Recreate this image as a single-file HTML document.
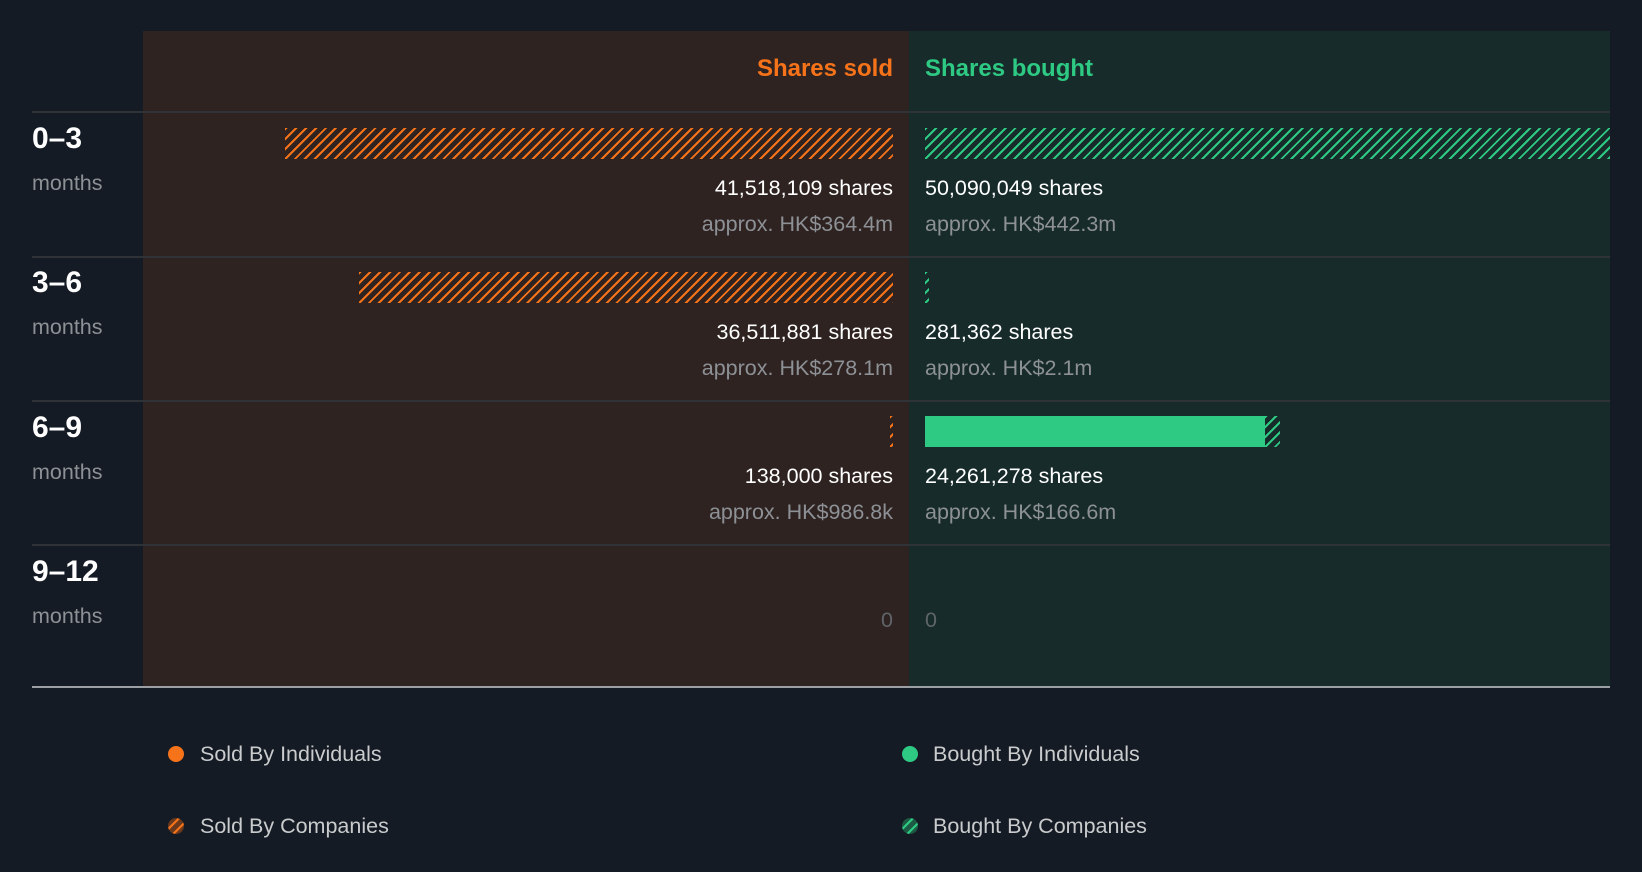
<!DOCTYPE html>
<html><head><meta charset="utf-8"><style>
*{margin:0;padding:0;box-sizing:border-box}
body{width:1642px;height:872px;background:#151b24;font-family:"Liberation Sans",sans-serif;position:relative;overflow:hidden}
.a{position:absolute}
.sold{background:#2e2321}
.bought{background:#172b2b}
.line{height:2px;background:#2f3338;left:32px;width:1578px}
.ho{background:repeating-linear-gradient(135deg,#f6731a 0 2px,transparent 2px 7px)}
.hg{background:repeating-linear-gradient(135deg,#2ec983 0 2px,transparent 2px 7px)}
.lbl{left:32px;color:#fff;font-weight:bold;font-size:30px}
.mo{left:32px;color:#8d9196;font-size:21.5px}
.r{text-align:right;right:749px;font-size:21.5px}
.l{left:925px;font-size:21.5px}
.w{color:#fff}.g{color:#8d9196}
.leg{font-size:21.5px;color:#c9cbcd}
.dot{width:16px;height:16px;border-radius:50%}
</style></head><body>
<div class="a sold" style="left:143px;top:31px;width:766px;height:656px"></div>
<div class="a bought" style="left:909px;top:31px;width:701px;height:656px"></div>
<div class="a r" style="top:55px;color:#f6731a;font-weight:bold;font-size:24px">Shares sold</div>
<div class="a l" style="top:55px;color:#2ec983;font-weight:bold;font-size:24px">Shares bought</div>
<div class="a line" style="top:111px"></div>
<div class="a line" style="top:256px"></div>
<div class="a line" style="top:400px"></div>
<div class="a line" style="top:544px"></div>
<div class="a" style="left:32px;top:686px;width:1578px;height:2px;background:#9ca0a5"></div>

<div class="a lbl" style="top:122px">0–3</div><div class="a mo" style="top:171px">months</div>
<div class="a lbl" style="top:266px">3–6</div><div class="a mo" style="top:315px">months</div>
<div class="a lbl" style="top:411px">6–9</div><div class="a mo" style="top:460px">months</div>
<div class="a lbl" style="top:555px">9–12</div><div class="a mo" style="top:604px">months</div>

<div class="a ho" style="left:285px;top:128px;width:608px;height:31px"></div>
<div class="a hg" style="left:925px;top:128px;width:685px;height:31px"></div>
<div class="a r w" style="top:176px">41,518,109 shares</div>
<div class="a l w" style="top:176px">50,090,049 shares</div>
<div class="a r g" style="top:212px">approx. HK$364.4m</div>
<div class="a l g" style="top:212px">approx. HK$442.3m</div>

<div class="a ho" style="left:359px;top:272px;width:534px;height:31px"></div>
<div class="a hg" style="left:925px;top:272px;width:4px;height:31px"></div>
<div class="a r w" style="top:320px">36,511,881 shares</div>
<div class="a l w" style="top:320px">281,362 shares</div>
<div class="a r g" style="top:356px">approx. HK$278.1m</div>
<div class="a l g" style="top:356px">approx. HK$2.1m</div>

<div class="a ho" style="left:890px;top:416px;width:3px;height:31px"></div>
<div class="a" style="left:925px;top:416px;width:340px;height:31px;background:#2ec983"></div>
<div class="a hg" style="left:1265px;top:416px;width:15px;height:31px"></div>
<div class="a r w" style="top:464px">138,000 shares</div>
<div class="a l w" style="top:464px">24,261,278 shares</div>
<div class="a r g" style="top:500px">approx. HK$986.8k</div>
<div class="a l g" style="top:500px">approx. HK$166.6m</div>

<div class="a r" style="top:608px;color:#5f6469">0</div>
<div class="a l" style="top:608px;color:#5f6469">0</div>

<div class="a dot" style="left:168px;top:746px;background:#f6731a"></div>
<div class="a leg" style="left:200px;top:742px">Sold By Individuals</div>
<div class="a dot ho" style="left:168px;top:818px;background-color:#6b3a1c"></div>
<div class="a leg" style="left:200px;top:814px">Sold By Companies</div>
<div class="a dot" style="left:902px;top:746px;background:#2ec983"></div>
<div class="a leg" style="left:933px;top:742px">Bought By Individuals</div>
<div class="a dot hg" style="left:902px;top:818px;background-color:#1d5a44"></div>
<div class="a leg" style="left:933px;top:814px">Bought By Companies</div>
</body></html>
